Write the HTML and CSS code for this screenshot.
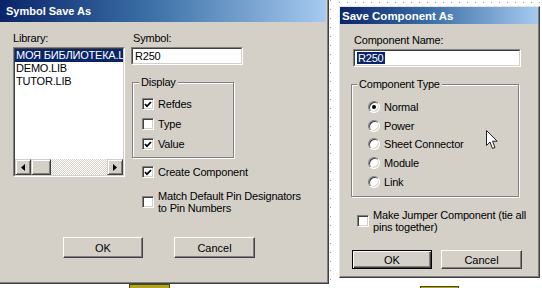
FILE: index.html
```html
<!DOCTYPE html>
<html>
<head>
<meta charset="utf-8">
<title>Save dialogs</title>
<link rel="stylesheet" href="styles.css">
</head>
<body>
<div class="page">
  <div class="col-left">
    <div class="dlg dlg-symbol">
      <div class="title title-symbol">Symbol Save As</div>
      <div class="body body-symbol">
        <div class="cols">
          <div class="col col-lib">
            <div class="label">Library:</div>
            <div class="sunken listbox">
              <div class="sunken-in listbox-in">
                <div class="items">
                  <div class="item sel">МОЯ БИБЛИОТЕКА.LIB</div>
                  <div class="item">DEMO.LIB</div>
                  <div class="item">TUTOR.LIB</div>
                </div>
                <div class="hscroll">
                  <div class="sbtn"><svg width="4" height="7" viewBox="0 0 4 7"><path d="M4 0 L0 3.5 L4 7 Z" fill="#000"/></svg></div>
                  <div class="track"><div class="thumb"></div></div>
                  <div class="sbtn"><svg width="4" height="7" viewBox="0 0 4 7"><path d="M0 0 L4 3.5 L0 7 Z" fill="#000"/></svg></div>
                </div>
              </div>
            </div>
          </div>
          <div class="col col-sym">
            <div class="label label-sym">Symbol:</div>
            <div class="sunken input input-sym"><div class="sunken-in input-in">R250</div></div>
            <fieldset class="group group-display">
              <legend>Display</legend>
              <div class="check-row"><span class="cb"><svg width="8" height="7" viewBox="0 0 8 7"><path d="M1 3 L3 5.2 L7 1" fill="none" stroke="#000" stroke-width="1.7"/></svg></span><span>Refdes</span></div>
              <div class="check-row"><span class="cb"></span><span>Type</span></div>
              <div class="check-row"><span class="cb"><svg width="8" height="7" viewBox="0 0 8 7"><path d="M1 3 L3 5.2 L7 1" fill="none" stroke="#000" stroke-width="1.7"/></svg></span><span>Value</span></div>
            </fieldset>
            <div class="check-row create"><span class="cb"><svg width="8" height="7" viewBox="0 0 8 7"><path d="M1 3 L3 5.2 L7 1" fill="none" stroke="#000" stroke-width="1.7"/></svg></span><span>Create Component</span></div>
            <div class="check-row multi match"><span class="cb"></span><span class="txt">Match Default Pin Designators<br>to Pin Numbers</span></div>
          </div>
        </div>
        <div class="buttons buttons-symbol">
          <div class="btn btn-ok">OK</div>
          <div class="btn btn-cancel">Cancel</div>
        </div>
      </div>
    </div>
    <div class="strip strip-left"></div>
  </div>

  <div class="gap"></div>

  <div class="col-right">
    <div class="topline"></div>
    <div class="dlg dlg-comp">
      <div class="title title-comp">Save Component As</div>
      <div class="body body-comp">
        <div class="label label-comp">Component Name:</div>
        <div class="sunken input input-comp"><div class="sunken-in input-in"><span class="seltext">R250</span></div></div>
        <fieldset class="group group-type">
          <legend>Component Type</legend>
          <div class="radio-row"><span class="rb on"></span><span>Normal</span></div>
          <div class="radio-row"><span class="rb"></span><span>Power</span></div>
          <div class="radio-row"><span class="rb"></span><span>Sheet Connector</span></div>
          <div class="radio-row"><span class="rb"></span><span>Module</span></div>
          <div class="radio-row"><span class="rb"></span><span>Link</span></div>
        </fieldset>
        <div class="check-row multi jumper"><span class="cb"></span><span class="txt">Make Jumper Component (tie all<br>pins together)</span></div>
        <div class="buttons buttons-comp">
          <div class="btn btn-default btn-ok2">OK</div>
          <div class="btn btn-cancel2">Cancel</div>
        </div>
      </div>
      <svg class="cursor" width="13" height="20" viewBox="0 0 13 20"><path d="M0.5 0.5 L0.5 15.5 L4 12 L6.5 18.5 L9 17.5 L6.5 11.2 L11.2 11.2 Z" fill="#fff" stroke="#222" stroke-width="1"/></svg>
    </div>
    <div class="strip strip-right"></div>
  </div>
</div>
</body>
</html>
```

FILE: styles.css
```css
* { box-sizing: border-box; }
html, body { margin: 0; padding: 0; }
body {
  width: 542px;
  height: 288px;
  overflow: hidden;
  background: #fff;
  font-family: "Liberation Sans", Arial, sans-serif;
  font-size: 11px;
  letter-spacing: -0.2px;
  color: #000;
}
.page { display: flex; align-items: flex-start; height: 288px; }

/* generic dialog parts */
.dlg { background: #d4d0c8; position: relative; }
.title {
  color: #fff;
  font-weight: bold;
  font-size: 11px;
  letter-spacing: 0;
  background: linear-gradient(to right, #0a246a 0%, #3a6ea5 45%, #a6caf0 100%);
  white-space: nowrap;
}
.label { height: 13px; line-height: 13px; white-space: nowrap; }

.sunken {
  border: 1px solid;
  border-color: #808080 #fff #fff #808080;
}
.sunken-in {
  border: 1px solid;
  border-color: #404040 #d4d0c8 #d4d0c8 #404040;
  background: #fff;
  height: 100%;
}

.btn {
  height: 21px;
  border: 1px solid;
  border-color: #fff #404040 #404040 #fff;
  box-shadow: inset -1px -1px 0 #808080;
  background: #d4d0c8;
  display: flex;
  align-items: center;
  justify-content: center;
  letter-spacing: 0;
}
.buttons { display: flex; }

.group {
  margin: 0;
  border: 1px solid #808080;
  box-shadow: 1px 1px 0 #fff, inset 1px 1px 0 #fff;
  min-width: 0;
}
.group legend {
  padding: 0 2px;
  height: 13px;
  line-height: 13px;
  background: #d4d0c8;
}

.check-row { display: flex; align-items: center; gap: 2px; height: 20px; white-space: nowrap; }
.check-row.multi { height: 24px; line-height: 12px; }
.cb {
  width: 12px;
  height: 12px;
  flex: none;
  background: #fff;
  border: 1px solid;
  border-color: #808080 #fff #fff #808080;
  box-shadow: inset 1px 1px 0 #404040, inset -1px -1px 0 #d4d0c8;
  display: flex;
  align-items: center;
  justify-content: center;
  margin-right: 2px;
}
.cb svg { display: block; }

.strip {
  background: #b3a51c;
  border-top: 1px solid #4d4712;
  border-left: 1px solid #4d4712;
  border-right: 1px solid #4d4712;
}

/* left dialog */
.col-left { width: 329px; display: flex; flex-direction: column; }
.dlg-symbol {
  height: 284px;
  padding-right: 2px;
  border-right: 1px solid #404040;
  border-bottom: 1px solid #404040;
  box-shadow: inset -1px -1px 0 #808080;
}
.title-symbol { height: 22px; line-height: 23px; padding-left: 6px; }
.body-symbol { padding: 10px 0 0 13px; }
.cols { display: flex; gap: 6px; }
.col { width: 112px; flex: none; }
.label { margin-bottom: 2px; }
.label-sym { padding-left: 2px; }

.listbox { height: 130px; }
.listbox-in { display: flex; flex-direction: column; }
.items { flex: 1; overflow: hidden; }
.item { height: 13px; line-height: 13px; padding-left: 1px; white-space: nowrap; overflow: hidden; }
.item.sel { background: #0a246a; color: #fff; }
.hscroll { height: 16px; display: flex; flex: none; }
.sbtn {
  width: 16px;
  height: 16px;
  flex: none;
  background: #d4d0c8;
  border: 1px solid;
  border-color: #d4d0c8 #404040 #404040 #d4d0c8;
  box-shadow: inset 1px 1px 0 #fff, inset -1px -1px 0 #808080;
  display: flex;
  align-items: center;
  justify-content: center;
}
.sbtn svg { display: block; }
.track {
  flex: 1;
  background-color: #eeede9;
  background-image: repeating-conic-gradient(#d4d0c8 0 25%, #fff 0 50%);
  background-size: 2px 2px;
}
.thumb {
  width: 20px;
  height: 16px;
  background: #d4d0c8;
  border: 1px solid;
  border-color: #d4d0c8 #404040 #404040 #d4d0c8;
  box-shadow: inset 1px 1px 0 #fff, inset -1px -1px 0 #808080;
}

.input { height: 18px; }
.input-in { line-height: 14px; padding-left: 2px; white-space: nowrap; }

.group-display {
  margin: 11px 0 0 1px;
  width: 102px;
  padding: 5px 0 3px 9px;
}
.group-display legend { margin-left: -3px; }
.create { margin-top: 4px; padding-left: 11px; }
.match { margin-top: 8px; padding-left: 11px; }

.buttons-symbol { margin-top: 23px; padding-left: 50px; gap: 31px; }
.btn-ok { width: 80px; }
.btn-cancel { width: 81px; }

.strip-left { width: 41px; height: 4px; margin-left: 129px; }

/* gap with dotted page line */
.gap {
  width: 10px;
  height: 288px;
  flex: none;
  background-image: repeating-linear-gradient(to bottom, #9a9a9a 0 1px, transparent 1px 9px);
  background-size: 1px 100%;
  background-position: 1px 0;
  background-repeat: no-repeat;
}

/* right dialog */
.col-right { width: 203px; flex: none; display: flex; flex-direction: column; }
.topline {
  height: 6px;
  background-image: repeating-linear-gradient(to right, #9a9a9a 0 1px, transparent 1px 8px);
  background-size: 100% 1px;
  background-position: 0 2px;
  background-repeat: no-repeat;
}
.dlg-comp {
  width: 201px;
  height: 272px;
  border: 1px solid;
  border-color: #e6e4de #404040 #404040 #e6e4de;
  box-shadow: inset -1px -1px 0 #808080;
}
.title-comp { height: 17px; line-height: 18px; padding-left: 2px; margin-right: 1px; font-size: 11.5px; }
.body-comp { padding: 10px 0 0 11px; }
.label-comp { padding-left: 3px; }
.input-comp { width: 168px; margin-left: 2px; }
.seltext { background: #0a246a; color: #fff; padding: 0 1px; }
.group-type {
  width: 168px;
  margin-top: 11px;
  padding: 6.5px 0 4.75px 16px;
}
.group-type legend { margin-left: -11px; }
.radio-row { height: 18.75px; display: flex; align-items: center; gap: 4px; white-space: nowrap; }
.rb {
  width: 12px;
  height: 12px;
  flex: none;
  border-radius: 50%;
  background: #fff;
  border: 1px solid;
  border-color: #808080 #fff #fff #808080;
  box-shadow: inset 1px 1px 0 #404040, inset -1px -1px 0 #d4d0c8;
  display: flex;
  align-items: center;
  justify-content: center;
}
.rb.on::after {
  content: "";
  width: 4px;
  height: 4px;
  border-radius: 50%;
  background: #000;
}
.jumper { margin-top: 12px; padding-left: 6px; }
.buttons-comp { margin-top: 17px; padding-left: 1px; gap: 9px; }
.btn-ok2 { width: 80px; height: 19px; }
.btn-cancel2 { width: 81px; height: 19px; }
.btn-default {
  border: 1px solid #000;
  box-shadow: inset 1px 1px 0 #fff, inset -1px -1px 0 #404040, inset -2px -2px 0 #808080;
}
.cursor { position: absolute; left: 146px; top: 123px; }

.strip-right { width: 39px; height: 2px; margin-left: 81px; margin-top: 8px; }
```
